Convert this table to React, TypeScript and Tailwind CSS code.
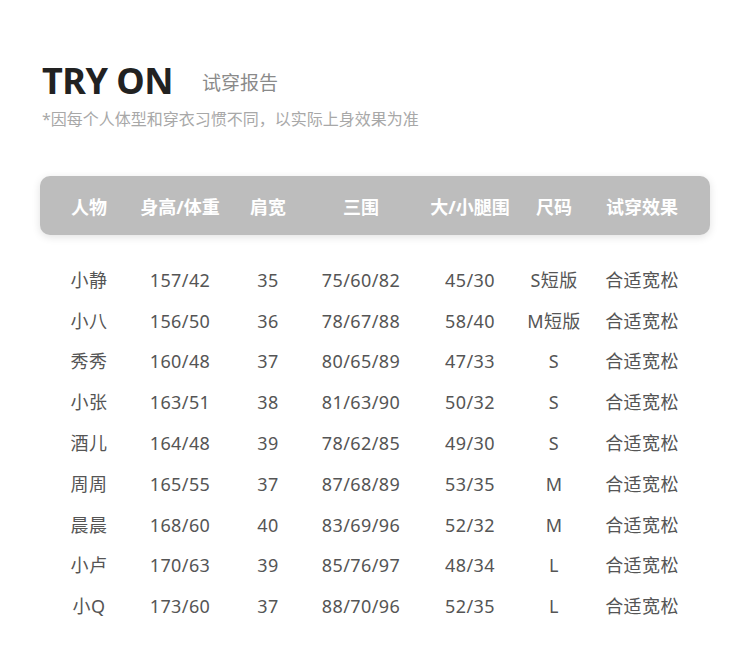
import React from 'react';

const HEAD = ['人物', '身高/体重', '肩宽', '三围', '大/小腿围', '尺码', '试穿效果'];

const ROWS: string[][] = [
  ['小静', '157/42', '35', '75/60/82', '45/30', 'S短版', '合适宽松'],
  ['小八', '156/50', '36', '78/67/88', '58/40', 'M短版', '合适宽松'],
  ['秀秀', '160/48', '37', '80/65/89', '47/33', 'S', '合适宽松'],
  ['小张', '163/51', '38', '81/63/90', '50/32', 'S', '合适宽松'],
  ['酒儿', '164/48', '39', '78/62/85', '49/30', 'S', '合适宽松'],
  ['周周', '165/55', '37', '87/68/89', '53/35', 'M', '合适宽松'],
  ['晨晨', '168/60', '40', '83/69/96', '52/32', 'M', '合适宽松'],
  ['小卢', '170/63', '39', '85/76/97', '48/34', 'L', '合适宽松'],
  ['小Q', '173/60', '37', '88/70/96', '52/35', 'L', '合适宽松'],
];

// 每欄寬度，讓文字中心對齊截圖
const COLS = 'grid grid-cols-[98px_84px_92px_94px_124px_44px_132px]';

function Cell({ children }: { children: React.ReactNode }) {
  return <div className="flex justify-center whitespace-nowrap">{children}</div>;
}

export default function App() {
  return (
    <div
      className="h-[669px] w-[750px] overflow-hidden bg-white"
      style={{ fontFamily: '"Noto Sans", "Noto Sans CJK SC", sans-serif' }}
    >
      <div className="px-[42px] pt-[61px]">
        <div className="flex items-center">
          <h1 className="text-[36px] font-bold leading-[40px] tracking-[-0.5px] text-[#222]">TRY ON</h1>
          <span className="ml-[29px] mt-[4px] text-[19px] text-[#8a8a8a]">试穿报告</span>
        </div>
        <p className="mt-[8px] text-[16px] leading-[20px] text-[#a8a8a8]">
          *因每个人体型和穿衣习惯不同，以实际上身效果为准
        </p>
      </div>

      <div className="mx-[40px] mt-[47px]">
        <div className={`${COLS} h-[59px] items-center rounded-[10px] bg-[#bdbdbd] pt-[3px] text-[18px] font-bold text-white shadow-[0_2px_8px_rgba(0,0,0,0.12)]`}>
          {HEAD.map((h) => (
            <Cell key={h}>{h}</Cell>
          ))}
        </div>

        <div className="mt-[25px] text-[18px] tracking-[0.4px] text-[#555]">
          {ROWS.map((row) => (
            <div key={row[0]} className={`${COLS} h-[40.8px] items-center`}>
              {row.map((v, i) => (
                <Cell key={i}>{v}</Cell>
              ))}
            </div>
          ))}
        </div>
      </div>
    </div>
  );
}
